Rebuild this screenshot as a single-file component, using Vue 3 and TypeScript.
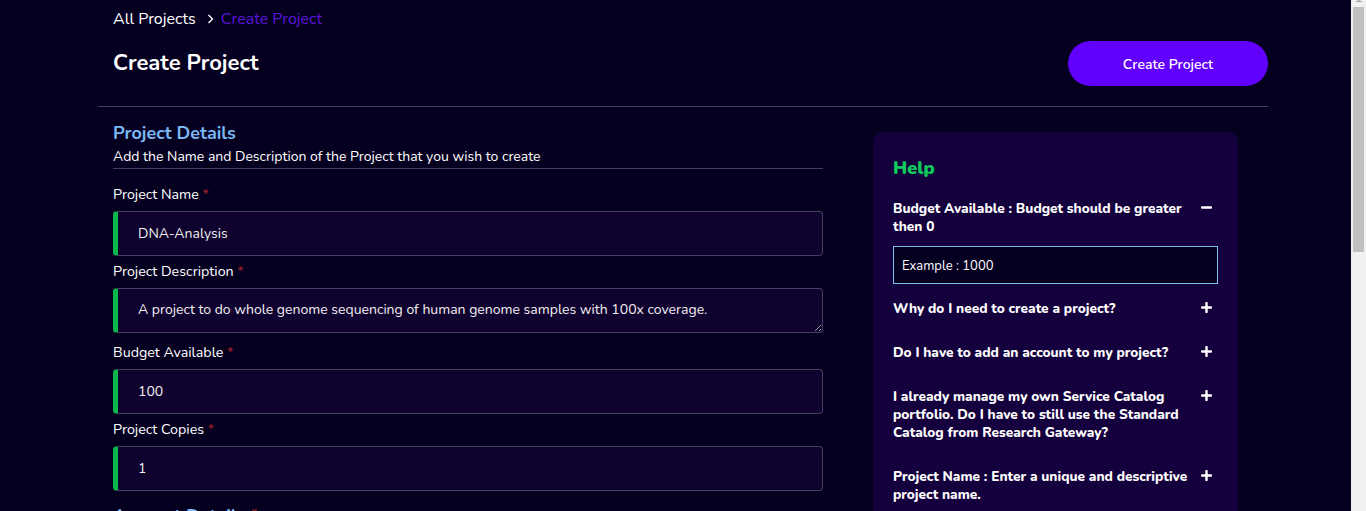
<script setup lang="ts">
const fields = [
  { label: 'Project Name', value: 'DNA-Analysis' },
  { label: 'Project Description', value: 'A project to do whole genome sequencing of human genome samples with 100x coverage.', area: true },
  { label: 'Budget Available', value: '100' },
  { label: 'Project Copies', value: '1' },
]

const faqs = [
  'Why do I need to create a project?',
  'Do I have to add an account to my project?',
  'I already manage my own Service Catalog portfolio. Do I have to still use the Standard Catalog from Research Gateway?',
  'Project Name : Enter a unique and descriptive project name.',
]
</script>

<template>
  <div class="page">
    <div class="content">
      <div class="crumbs">
        <span>All Projects</span>
        <svg width="8" height="10" viewBox="0 0 8 10"><path d="M1.5 1l4 4-4 4" fill="none" stroke="#fff" stroke-width="1.4" /></svg>
        <span class="current">Create Project</span>
      </div>
      <div class="head">
        <h1>Create Project</h1>
        <button class="create">Create Project</button>
      </div>
      <div class="columns">
        <div class="form">
          <h2>Project Details</h2>
          <p class="sub">Add the Name and Description of the Project that you wish to create</p>
          <div v-for="f in fields" :key="f.label" class="field">
            <label>{{ f.label }} <span class="req">*</span></label>
            <textarea v-if="f.area" :value="f.value" class="input area" readonly></textarea>
            <input v-else :value="f.value" class="input" readonly />
          </div>
          <h2 class="next">Account Details <span class="req">*</span></h2>
        </div>
        <aside class="help">
          <h3>Help</h3>
          <div class="faq open">
            <span>Budget Available : Budget should be greater then 0</span>
            <svg class="ico" width="11" height="11" viewBox="0 0 11 11"><path d="M1 5.5h9" stroke="#fff" stroke-width="2.4" stroke-linecap="round" /></svg>
          </div>
          <div class="example">Example : 1000</div>
          <div v-for="q in faqs" :key="q" class="faq">
            <span>{{ q }}</span>
            <svg class="ico" width="11" height="11" viewBox="0 0 11 11"><path d="M1 5.5h9M5.5 1v9" stroke="#fff" stroke-width="2.4" stroke-linecap="round" /></svg>
          </div>
        </aside>
      </div>
    </div>
    <div class="scrollbar">
      <div class="arrow"></div>
      <div class="thumb"></div>
    </div>
  </div>
</template>

<style scoped>
.page {
  height: 511px;
  overflow: hidden;
  background: #05001f;
  color: #fff;
  font-family: 'Nunito', 'Open Sans', 'Noto Sans', sans-serif;
  display: flex;
}

.content {
  flex: 1;
  min-width: 0;
  padding-left: 98px;
  padding-right: 83px;
}

.crumbs {
  display: flex;
  align-items: center;
  gap: 11px;
  padding: 7px 0 0 15px;
  font-size: 16px;
  height: 24px;
}

.current {
  margin-left: -5px;
  color: #5a14d8;
}

.head {
  display: flex;
  justify-content: space-between;
  align-items: flex-start;
  padding: 10px 0 20px 15px;
  border-bottom: 1px solid #45405f;
}

h1 {
  margin: 7px 0 0;
  font-size: 22px;
  font-weight: 700;
}

.create {
  width: 200px;
  height: 45px;
  padding: 2px 0 0;
  border: none;
  border-radius: 23px;
  background: #6200ff;
  color: #fff;
  font: inherit;
  font-size: 14px;
  font-weight: 600;
}

.columns {
  display: flex;
  padding-left: 15px;
}

.form {
  width: 710px;
  padding-top: 15px;
}

h2 {
  margin: 0;
  font-size: 18px;
  font-weight: 700;
  color: #7ab8f5;
  line-height: 22px;
}

.next {
  margin-top: 14px;
}

.sub {
  margin: 0 0 15px;
  padding: 3px 0 0;
  height: 21px;
  font-size: 14px;
  line-height: 20px;
  border-bottom: 1px solid #45405f;
}

.field label {
  display: block;
  padding-top: 1px;
  font-size: 14.25px;
  line-height: 20px;
  margin-bottom: 6px;
}

.req {
  color: #a3212a;
}

.input {
  display: block;
  box-sizing: border-box;
  width: 100%;
  height: 45px;
  padding: 0 20px;
  margin-bottom: 5px;
  background: #10022f;
  color: #f0f0f0;
  border: 1px solid #45405f;
  border-left: 5px solid #08b84a;
  border-radius: 4px;
  font: inherit;
  font-size: 14px;
  outline: none;
}

.area {
  padding-top: 11px;
  margin-bottom: 9px;
}

.help {
  box-sizing: border-box;
  width: 365px;
  margin: 25px 0 0 50px;
  padding: 20px;
  height: 500px;
  background: #14003d;
  border-radius: 10px;
}

h3 {
  margin: 4px 0 20px;
  font-size: 18px;
  font-weight: 900;
  color: #0ecb5b;
}

.faq {
  display: flex;
  justify-content: space-between;
  align-items: flex-start;
  gap: 8px;
  font-size: 13.65px;
  font-weight: 800;
  line-height: 18px;
  margin-bottom: 26px;
}

.faq.open {
  margin-bottom: 10px;
}

.ico {
  flex: none;
  margin: 2px 6px 0 0;
}

.example {
  box-sizing: border-box;
  height: 38px;
  padding: 1px 8px 0;
  margin-bottom: 16px;
  display: flex;
  align-items: center;
  background: #05001f;
  border: 1px solid #7fbfe8;
  font-size: 13px;
}

.scrollbar {
  box-sizing: border-box;
  width: 15px;
  padding: 0 2px;
  background: #f1f1f1;
  flex: none;
}

.arrow {
  width: 0;
  height: 0;
  margin: 0 auto 5px;
  border-left: 4px solid transparent;
  border-right: 4px solid transparent;
  border-bottom: 2px solid #a3a3a3;
}

.thumb {
  height: 245px;
  background: #c1c1c1;
}
</style>
